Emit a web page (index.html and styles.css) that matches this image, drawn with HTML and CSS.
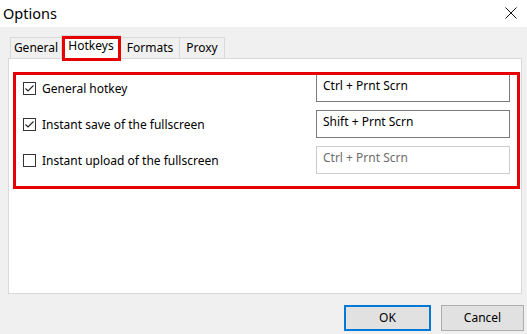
FILE: index.html
```html
<!DOCTYPE html>
<html>
<head>
<meta charset="utf-8">
<link rel="stylesheet" href="styles.css">
</head>
<body>
<div class="window">
  <div class="titlebar">
    <span class="title">Options</span>
    <svg class="close" width="12" height="12" viewBox="0 0 12 12"><path d="M0.5 0.5 L11.5 11.5 M11.5 0.5 L0.5 11.5" stroke="#111" stroke-width="1" fill="none"/></svg>
  </div>
  <div class="content">
    <div class="tabs">
      <div class="tab tab-general">General</div>
      <div class="tab tab-hotkeys active">Hotkeys<span class="mark mark-tab"></span></div>
      <div class="tab tab-formats">Formats</div>
      <div class="tab tab-proxy">Proxy</div>
    </div>
    <div class="panel">
      <div class="rows">
        <div class="row">
          <label class="check"><span class="box"><svg width="11" height="11" viewBox="0 0 11 11"><path d="M1.5 5.5 L4 8 L9.5 2.5" stroke="#222" stroke-width="1.1" fill="none"/></svg></span>General hotkey</label>
          <div class="field">Ctrl + Prnt Scrn</div>
        </div>
        <div class="row">
          <label class="check"><span class="box"><svg width="11" height="11" viewBox="0 0 11 11"><path d="M1.5 5.5 L4 8 L9.5 2.5" stroke="#222" stroke-width="1.1" fill="none"/></svg></span>Instant save of the fullscreen</label>
          <div class="field">Shift + Prnt Scrn</div>
        </div>
        <div class="row">
          <label class="check"><span class="box"></span>Instant upload of the fullscreen</label>
          <div class="field disabled">Ctrl + Prnt Scrn</div>
        </div>
      </div>
      <span class="mark mark-panel"></span>
    </div>
    <div class="buttons">
      <div class="btn btn-ok">OK</div>
      <div class="btn btn-cancel">Cancel</div>
    </div>
  </div>
</div>
</body>
</html>
```

FILE: styles.css
```css
html, body {
  margin: 0;
  padding: 0;
}
body {
  width: 527px;
  height: 334px;
  overflow: hidden;
  background: #f0f0f0;
  font-family: "Noto Sans", "Open Sans", sans-serif;
  font-size: 12px;
  color: #000;
}
.window {
  width: 527px;
  height: 334px;
  display: flex;
  flex-direction: column;
}
.titlebar {
  height: 27px;
  background: #fff;
  display: flex;
  align-items: center;
  justify-content: space-between;
  padding: 0 10px 0 3px;
  box-sizing: border-box;
}
.title {
  font-size: 14.5px;
  line-height: 20px;
  margin-top: -2px;
}
.close {
  margin-top: -2px;
}
.content {
  padding: 8px 0 0 8px;
  display: flex;
  flex-direction: column;
}
.tabs {
  display: flex;
  align-items: flex-end;
  height: 23px;
  padding-left: 2px;
  position: relative;
  z-index: 2;
}
.tab {
  box-sizing: border-box;
  height: 21px;
  border-top: 1px solid #d9d9d9;
  border-left: 1px solid #d9d9d9;
  background: #f0f0f0;
  text-align: center;
  line-height: 19px;
  font-size: 12px;
}
.tab-general { width: 51px; }
.tab-hotkeys { width: 60px; }
.tab-formats { width: 58px; }
.tab-proxy { width: 46px; border-right: 1px solid #d9d9d9; }
.tab.active {
  height: 24px;
  margin-bottom: -1px;
  background: #fff;
  border-right: 1px solid #d9d9d9;
  position: relative;
  line-height: 20px;
}
.tab.active + .tab {
  border-left: none;
}
.mark {
  position: absolute;
  box-sizing: border-box;
  border: 3px solid #e60000;
  pointer-events: none;
}
.mark-tab {
  left: 0;
  top: 0;
  width: 59px;
  height: 25px;
}
.panel {
  position: relative;
  box-sizing: border-box;
  width: 514px;
  height: 236px;
  background: #fff;
  border: 1px solid #d9d9d9;
  padding: 15px 11px 0 14px;
}
.mark-panel {
  left: 4px;
  top: 13px;
  width: 507px;
  height: 117px;
}
.rows {
  display: flex;
  flex-direction: column;
  gap: 8px;
}
.row {
  height: 28px;
  display: flex;
  align-items: center;
  justify-content: space-between;
}
.check {
  display: flex;
  align-items: center;
  gap: 6px;
  font-size: 12px;
}
.box {
  width: 13px;
  height: 13px;
  box-sizing: border-box;
  border: 1px solid #333;
  background: #fff;
  display: flex;
  align-items: center;
  justify-content: center;
}
.box svg {
  display: block;
}
.field {
  width: 194px;
  height: 28px;
  box-sizing: border-box;
  border: 1px solid #7a7a7a;
  padding: 0 6px;
  line-height: 22px;
  font-size: 12px;
}
.field.disabled {
  border-color: #cccccc;
  color: #6d6d6d;
}
.buttons {
  display: flex;
  justify-content: flex-end;
  gap: 10px;
  margin-top: 11px;
  padding-right: 3px;
}
.btn {
  box-sizing: border-box;
  height: 26px;
  background: #e1e1e1;
  border: 1px solid #adadad;
  text-align: center;
  line-height: 24px;
  font-size: 12px;
}
.btn-ok {
  width: 87px;
  border: 2px solid #0078d7;
  line-height: 22px;
}
.btn-cancel {
  width: 83px;
}
```
